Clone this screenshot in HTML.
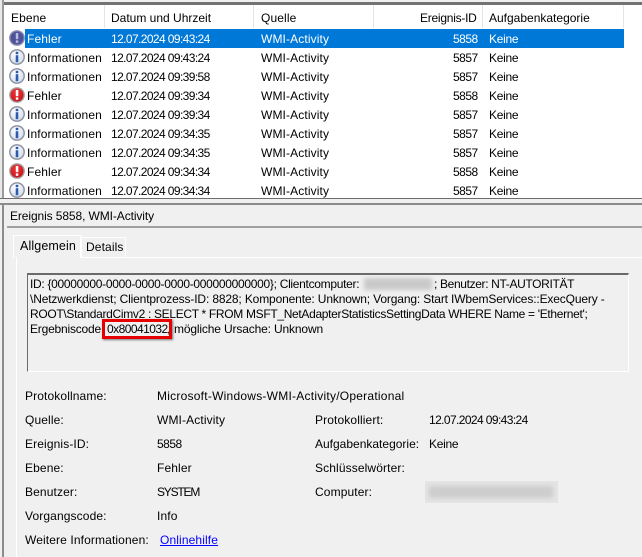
<!DOCTYPE html>
<html><head><meta charset="utf-8"><style>
html,body{margin:0;padding:0}
body{width:642px;height:557px;position:relative;overflow:hidden;background:#f0f0f0;font:12px "Liberation Sans",sans-serif;color:#000}
div,a,svg{position:absolute}
.t{white-space:nowrap;line-height:15px;height:15px;letter-spacing:.12px;margin-top:2px}
.d{letter-spacing:-.6px}
.n{letter-spacing:-.5px}
.k{letter-spacing:-.3px}
.w{color:#fff}
</style></head><body>
<!-- list -->
<div style="left:0;top:0;width:642px;height:198px;background:#fff"></div>
<div style="left:0;top:0;width:642px;height:2px;background:#f0f0f0"></div>
<div style="left:0;top:2px;width:642px;height:3px;background:#737373"></div>
<div style="left:0;top:0;width:4px;height:198px;background:#9a9a9a"></div>
<div style="left:0;top:0;width:2px;height:198px;background:#e8e8e8"></div>
<div style="left:104px;top:5px;width:1px;height:23px;background:#e5e5e5"></div>
<div style="left:253px;top:5px;width:1px;height:23px;background:#e5e5e5"></div>
<div style="left:373px;top:5px;width:1px;height:23px;background:#e5e5e5"></div>
<div style="left:482px;top:5px;width:1px;height:23px;background:#e5e5e5"></div>
<div style="left:623px;top:5px;width:1px;height:23px;background:#e5e5e5"></div>
<div class="t" style="left:11px;top:9px">Ebene</div>
<div class="t" style="left:111px;top:9px;letter-spacing:0">Datum und Uhrzeit</div>
<div class="t" style="left:261px;top:9px">Quelle</div>
<div class="t" style="left:420px;top:9px;letter-spacing:-.25px">Ereignis-ID</div>
<div class="t" style="left:489px;top:9px;letter-spacing:0">Aufgabenkategorie</div>
<div style="left:25px;top:29px;width:599px;height:19px;background:#0078d7"></div>
<svg width="0" height="0" style="position:absolute"><defs>
<radialGradient id="b" cx=".4" cy=".3" r=".8"><stop offset="0" stop-color="#fff"/><stop offset="1" stop-color="#cdd6ea"/></radialGradient>
<radialGradient id="r" cx=".45" cy=".3" r=".8"><stop offset="0" stop-color="#ee3a3a"/><stop offset="1" stop-color="#c00c14"/></radialGradient>
<g id="inf"><circle cx="8" cy="8" r="7.2" fill="url(#b)" stroke="#8b909c" stroke-width="1.4"/><rect x="6.7" y="2.8" width="2.6" height="2.4" fill="#2a5cae"/><rect x="6.7" y="6.2" width="2.6" height="7" fill="#2a5cae"/></g>
<g id="err"><circle cx="8" cy="8" r="7.2" fill="url(#r)" stroke="#a3a3a3" stroke-width="1.4"/><rect x="6.8" y="3" width="2.5" height="6.2" fill="#fff"/><rect x="6.8" y="10.4" width="2.5" height="2.4" fill="#fff"/></g>
</defs></svg>
<svg style="left:9px;top:30px" width="16" height="16" viewBox="0 0 16 16"><circle cx="8" cy="8" r="7.2" fill="#4e5296" stroke="#8c8fb4" stroke-width="1.4"/><rect x="6.8" y="3" width="2.5" height="6.2" fill="#b9bce0"/><rect x="6.8" y="10.4" width="2.5" height="2.4" fill="#b9bce0"/></svg>
<svg style="left:9px;top:49px" width="16" height="16" viewBox="0 0 16 16"><use href="#inf"/></svg>
<svg style="left:9px;top:68px" width="16" height="16" viewBox="0 0 16 16"><use href="#inf"/></svg>
<svg style="left:9px;top:87px" width="16" height="16" viewBox="0 0 16 16"><use href="#err"/></svg>
<svg style="left:9px;top:106px" width="16" height="16" viewBox="0 0 16 16"><use href="#inf"/></svg>
<svg style="left:9px;top:125px" width="16" height="16" viewBox="0 0 16 16"><use href="#inf"/></svg>
<svg style="left:9px;top:144px" width="16" height="16" viewBox="0 0 16 16"><use href="#inf"/></svg>
<svg style="left:9px;top:163px" width="16" height="16" viewBox="0 0 16 16"><use href="#err"/></svg>
<svg style="left:9px;top:182px" width="16" height="16" viewBox="0 0 16 16"><use href="#inf"/></svg>

<div class="t w" style="left:27px;top:30px">Fehler</div><div class="t d w" style="left:111px;top:30px">12.07.2024 09:43:24</div><div class="t w" style="left:261px;top:30px">WMI-Activity</div><div class="t n w" style="left:453px;top:30px">5858</div><div class="t k w" style="left:489px;top:30px">Keine</div>
<div class="t" style="left:27px;top:49px">Informationen</div><div class="t d" style="left:111px;top:49px">12.07.2024 09:43:24</div><div class="t" style="left:261px;top:49px">WMI-Activity</div><div class="t n" style="left:453px;top:49px">5857</div><div class="t k" style="left:489px;top:49px">Keine</div>
<div class="t" style="left:27px;top:68px">Informationen</div><div class="t d" style="left:111px;top:68px">12.07.2024 09:39:58</div><div class="t" style="left:261px;top:68px">WMI-Activity</div><div class="t n" style="left:453px;top:68px">5857</div><div class="t k" style="left:489px;top:68px">Keine</div>
<div class="t" style="left:27px;top:87px">Fehler</div><div class="t d" style="left:111px;top:87px">12.07.2024 09:39:34</div><div class="t" style="left:261px;top:87px">WMI-Activity</div><div class="t n" style="left:453px;top:87px">5858</div><div class="t k" style="left:489px;top:87px">Keine</div>
<div class="t" style="left:27px;top:106px">Informationen</div><div class="t d" style="left:111px;top:106px">12.07.2024 09:39:34</div><div class="t" style="left:261px;top:106px">WMI-Activity</div><div class="t n" style="left:453px;top:106px">5857</div><div class="t k" style="left:489px;top:106px">Keine</div>
<div class="t" style="left:27px;top:125px">Informationen</div><div class="t d" style="left:111px;top:125px">12.07.2024 09:34:35</div><div class="t" style="left:261px;top:125px">WMI-Activity</div><div class="t n" style="left:453px;top:125px">5857</div><div class="t k" style="left:489px;top:125px">Keine</div>
<div class="t" style="left:27px;top:144px">Informationen</div><div class="t d" style="left:111px;top:144px">12.07.2024 09:34:35</div><div class="t" style="left:261px;top:144px">WMI-Activity</div><div class="t n" style="left:453px;top:144px">5857</div><div class="t k" style="left:489px;top:144px">Keine</div>
<div class="t" style="left:27px;top:163px">Fehler</div><div class="t d" style="left:111px;top:163px">12.07.2024 09:34:34</div><div class="t" style="left:261px;top:163px">WMI-Activity</div><div class="t n" style="left:453px;top:163px">5858</div><div class="t k" style="left:489px;top:163px">Keine</div>
<div class="t" style="left:27px;top:182px">Informationen</div><div class="t d" style="left:111px;top:182px">12.07.2024 09:34:34</div><div class="t" style="left:261px;top:182px">WMI-Activity</div><div class="t n" style="left:453px;top:182px">5857</div><div class="t k" style="left:489px;top:182px">Keine</div>

<!-- splitter -->
<div style="left:0;top:198px;width:642px;height:1px;background:#6d6d6d"></div>
<div style="left:0;top:203px;width:642px;height:2px;background:#8c8c8c"></div>
<div style="left:2px;top:203px;width:2px;height:354px;background:#8c8c8c"></div>
<div class="t" style="left:10px;top:207px;letter-spacing:-.1px">Ereignis 5858, WMI-Activity</div>
<div style="left:7px;top:226px;width:635px;height:2px;background:#a0a0a0"></div>
<!-- tabs -->
<div style="left:16px;top:257px;width:626px;height:1px;background:#fff"></div>
<div style="left:13px;top:235px;width:68px;height:23px;background:#f0f0f0;border:1px solid #fff;border-bottom:0;box-sizing:border-box"></div>
<div style="left:81px;top:237px;width:45px;height:20px;background:#f0f0f0;border:1px solid #fff;border-bottom:0;box-sizing:border-box"></div>
<div class="t" style="left:20px;top:237px;font-size:12.5px">Allgemein</div>
<div class="t" style="left:86px;top:238px">Details</div>
<div style="left:16px;top:257px;width:1px;height:300px;background:#fff"></div>
<!-- text box -->
<div style="left:27px;top:273px;width:602px;height:99px;border:solid;border-width:2px 1px 1px 1px;border-color:#6a6a6a #fff #fff #6a6a6a;box-sizing:border-box"></div>
<div class="t" style="left:30px;top:275px;letter-spacing:-.3px">ID: {00000000-0000-0000-0000-000000000000}; Clientcomputer:</div>
<div style="left:364px;top:278px;width:68px;height:12px;background:#c9c9c9;filter:blur(2px)"></div>
<div class="t" style="left:434px;top:275px;letter-spacing:-.35px">; Benutzer: NT-AUTORITÄT</div>
<div class="t" style="left:30px;top:290px;letter-spacing:-.145px">\Netzwerkdienst; Clientprozess-ID: 8828; Komponente: Unknown; Vorgang: Start IWbemServices::ExecQuery -</div>
<div class="t" style="left:30px;top:305px;letter-spacing:-.32px">ROOT\StandardCimv2 : SELECT * FROM MSFT_NetAdapterStatisticsSettingData WHERE Name = 'Ethernet';</div>
<div class="t" style="left:30px;top:320px;letter-spacing:-.2px">Ergebniscode:</div>
<div class="t" style="left:107px;top:320px;letter-spacing:-.55px">0x80041032</div>
<div class="t" style="left:167px;top:320px">,</div>
<div class="t" style="left:174px;top:320px;letter-spacing:-.15px">mögliche Ursache: Unknown</div>
<div style="left:102px;top:319px;width:70px;height:20px;border:3px solid #e60000;box-sizing:border-box;box-shadow:1px 1px 2px rgba(0,0,0,.5)"></div>
<!-- details -->
<div class="t" style="left:25px;top:387px">Protokollname:</div><div class="t" style="left:157px;top:387px;letter-spacing:.24px">Microsoft-Windows-WMI-Activity/Operational</div>
<div class="t" style="left:25px;top:411px">Quelle:</div><div class="t" style="left:157px;top:411px">WMI-Activity</div>
<div class="t" style="left:315px;top:411px">Protokolliert:</div><div class="t d" style="left:429px;top:411px">12.07.2024 09:43:24</div>
<div class="t" style="left:25px;top:435px">Ereignis-ID:</div><div class="t n" style="left:157px;top:435px">5858</div>
<div class="t" style="left:315px;top:435px;letter-spacing:0">Aufgabenkategorie:</div><div class="t k" style="left:429px;top:435px">Keine</div>
<div class="t" style="left:25px;top:459px">Ebene:</div><div class="t" style="left:157px;top:459px">Fehler</div>
<div class="t" style="left:315px;top:459px">Schlüsselwörter:</div>
<div class="t" style="left:25px;top:483px">Benutzer:</div><div class="t" style="left:157px;top:483px;letter-spacing:-1.2px">SYSTEM</div>
<div class="t" style="left:315px;top:483px">Computer:</div>
<div style="left:425px;top:481px;width:133px;height:22px;background:#e4e4e4"></div>
<div style="left:429px;top:486px;width:124px;height:12px;background:#cdcdcd;filter:blur(2px)"></div>
<div class="t" style="left:25px;top:507px">Vorgangscode:</div><div class="t" style="left:157px;top:507px">Info</div>
<div class="t" style="left:25px;top:531px">Weitere Informationen:</div>
<a class="t" style="left:160px;top:531px;color:#0000ff;text-decoration:underline">Onlinehilfe</a>
</body></html>
